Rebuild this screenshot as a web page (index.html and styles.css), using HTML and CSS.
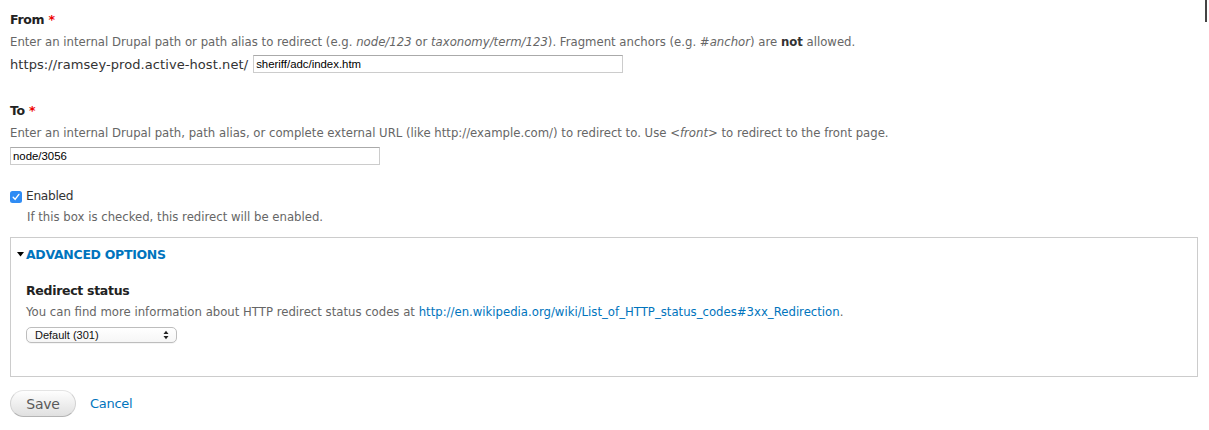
FILE: index.html
```html
<!DOCTYPE html>
<html lang="en">
<head>
<meta charset="utf-8">
<title>Redirect</title>
<link rel="stylesheet" href="styles.css">
</head>
<body>
<form class="redirect-form">
  <div class="form-item item-from">
    <label class="form-label">From <span class="req">*</span></label>
    <div class="description">Enter an internal Drupal path or path alias to redirect (e.g. <em>node/123</em> or <em>taxonomy/term/123</em>). Fragment anchors (e.g. <em>#anchor</em>) are <strong>not</strong> allowed.</div>
    <div class="prefix-row">
      <span class="prefix">https://ramsey-prod.active-host.net/</span>
      <input class="form-text" type="text" value="sheriff/adc/index.htm">
    </div>
  </div>

  <div class="form-item item-to">
    <label class="form-label">To <span class="req">*</span></label>
    <div class="description">Enter an internal Drupal path, path alias, or complete external URL (like http://example.com/) to redirect to. Use <em>&lt;front&gt;</em> to redirect to the front page.</div>
    <input class="form-text" type="text" value="node/3056">
  </div>

  <div class="form-item item-check">
    <label class="check-row">
      <span class="checkbox"><svg width="12" height="12" viewBox="0 0 12 12"><rect x="0" y="0" width="12" height="12" rx="2.5" fill="#2f8cf4"/><path d="M3.2 6.3 L5.1 8.4 L8.9 3.4" fill="none" stroke="#fff" stroke-width="1.4" stroke-linecap="round" stroke-linejoin="round"/></svg></span>
      <span class="check-label">Enabled</span>
    </label>
    <div class="description check-desc">If this box is checked, this redirect will be enabled.</div>
  </div>

  <fieldset class="advanced">
    <div class="legend"><svg class="tri" width="7" height="5" viewBox="0 0 7 5"><path d="M0 0 H7 L3.5 4.5 Z" fill="#000"/></svg><span>ADVANCED OPTIONS</span></div>
    <div class="form-item item-status">
      <label class="form-label">Redirect status</label>
      <div class="description">You can find more information about HTTP redirect status codes at <a href="#">http://en.wikipedia.org/wiki/List_of_HTTP_status_codes#3xx_Redirection</a>.</div>
      <div class="select">
        <span class="select-text">Default (301)</span>
        <svg class="arrows" width="6" height="10" viewBox="0 0 6 10"><path d="M0.5 4 L3 0.8 L5.5 4 Z M0.5 6 L3 9.2 L5.5 6 Z" fill="#222"/></svg>
      </div>
    </div>
  </fieldset>

  <div class="actions">
    <button class="button" type="button">Save</button>
    <a class="cancel" href="#">Cancel</a>
  </div>
</form>
<div class="scroll-edge"></div>
</body>
</html>
```

FILE: styles.css
```css
html, body {
  margin: 0;
  padding: 0;
  background: #fff;
}
body {
  font-family: "DejaVu Sans", "Lucida Grande", Verdana, sans-serif;
  font-size: 13px;
  color: #333;
}
.redirect-form {
  padding: 11px 11px 0 10px;
}
.form-item {
  display: flex;
  flex-direction: column;
  align-items: flex-start;
}
.form-label {
  display: block;
  font-weight: bold;
  font-size: 12.5px;
  letter-spacing: -0.3px;
  line-height: 18px;
  color: #222;
}
.req {
  color: #e00;
}
.description {
  font-size: 11.7px;
  line-height: 18px;
  color: #666;
  margin-top: 4px;
}
.description strong {
  color: #333;
}
.prefix-row {
  display: flex;
  align-items: center;
  gap: 5px;
  margin-top: 4px;
  height: 18px;
}
.prefix {
  font-size: 13px;
  letter-spacing: 0.08px;
  color: #333;
}
.form-text {
  box-sizing: border-box;
  width: 370px;
  height: 18px;
  margin: 0;
  padding: 0 2px;
  border: 1px solid #ccc;
  border-top-color: #aaa;
  font-family: "Liberation Sans", Arial, sans-serif;
  font-size: 11.4px;
  color: #000;
  background: #fff;
}
.item-to {
  margin-top: 29px;
}
.item-to .description {
  margin-top: 4px;
}
.item-to .form-text {
  margin-top: 5px;
}
.item-check {
  margin-top: 22px;
}
.check-row {
  display: flex;
  align-items: center;
  gap: 4px;
  height: 18px;
}
.checkbox {
  display: flex;
  width: 12px;
  height: 12px;
  margin-top: 1px;
}
.check-label {
  font-size: 12.2px;
  letter-spacing: -0.3px;
  color: #333;
}
.check-desc {
  margin-top: 3px;
  padding-left: 17px;
}
.advanced {
  margin: 11px 0 0 0;
  padding: 7px 15px 33px 15px;
  border: 1px solid #ccc;
  min-inline-size: 0;
}
.legend {
  display: flex;
  align-items: center;
  height: 18px;
  margin-left: -9px;
  gap: 2px;
  font-weight: bold;
  font-size: 12.5px;
  letter-spacing: -0.3px;
  color: #0074bd;
}
.tri {
  display: block;
  margin-top: 1px;
}
.item-status {
  margin-top: 19px;
}
.item-status .description {
  margin-top: 3px;
}
.description a {
  color: #0074bd;
  text-decoration: none;
}
.select {
  box-sizing: border-box;
  width: 151px;
  height: 16px;
  margin-top: 6px;
  display: flex;
  align-items: center;
  justify-content: space-between;
  padding: 0 7px 0 8px;
  border: 1px solid #bdbdbd;
  border-radius: 5px;
  background: linear-gradient(#fff, #f6f6f6);
  box-shadow: 0 1px 0 rgba(0,0,0,0.04);
}
.select-text {
  font-family: "Liberation Sans", Arial, sans-serif;
  font-size: 11px;
  color: #111;
}
.arrows {
  display: block;
}
.actions {
  display: flex;
  align-items: center;
  margin-top: 13px;
  gap: 14px;
}
.button {
  box-sizing: border-box;
  height: 27px;
  width: 66px;
  padding: 0;
  border: 1px solid #d2d2d2;
  border-top-color: #e4e4e4;
  border-bottom-color: #b4b4b4;
  border-radius: 14px;
  background: linear-gradient(#fefefe, #e0e0e0);
  font-family: "DejaVu Sans", "Lucida Grande", Verdana, sans-serif;
  font-size: 14px;
  letter-spacing: -0.2px;
  color: #5a5a5a;
}
.cancel {
  font-size: 13px;
  letter-spacing: -0.3px;
  color: #0074bd;
  text-decoration: none;
}
.scroll-edge {
  position: fixed;
  top: 0;
  right: 2px;
  width: 2px;
  height: 22px;
  background: #444;
}
```
